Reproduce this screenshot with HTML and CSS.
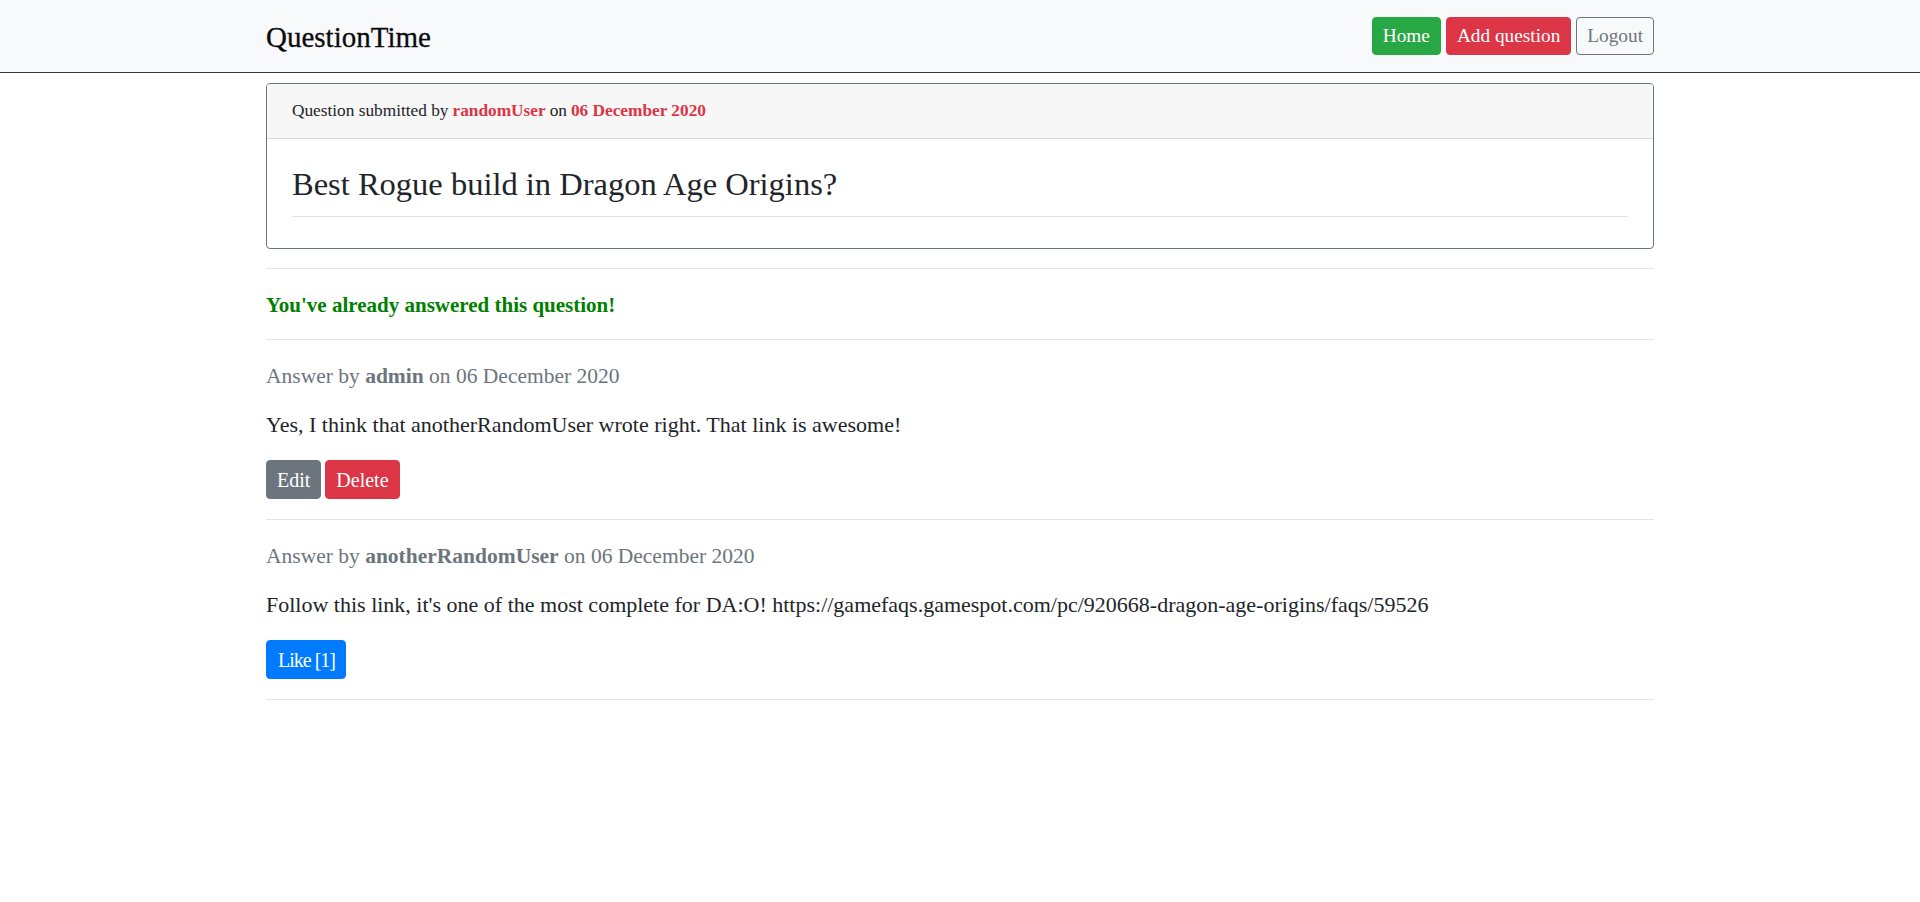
FILE: index.html
```html
<!DOCTYPE html>
<html lang="en">
<head>
<meta charset="utf-8">
<title>QuestionTime</title>
<link rel="stylesheet" href="styles.css">
</head>
<body>
<nav class="navbar">
  <div class="nav-inner">
    <a class="brand" href="#">QuestionTime</a>
    <div class="nav-actions">
      <a class="btn btn-success" href="#">Home</a>
      <a class="btn btn-danger" href="#">Add question</a>
      <a class="btn btn-outline" href="#">Logout</a>
    </div>
  </div>
</nav>
<main class="container">
  <section class="card">
    <div class="card-header">Question submitted by <span class="accent">randomUser</span> on <span class="accent">06 December 2020</span></div>
    <div class="card-body">
      <h2 class="question-title">Best Rogue build in Dragon Age Origins?</h2>
      <hr class="title-rule">
    </div>
  </section>
  <hr class="rule rule-first">
  <p class="notice">You've already answered this question!</p>
  <hr class="rule">
  <article class="answer">
    <p class="answer-meta">Answer by <strong>admin</strong> on 06 December 2020</p>
    <p class="answer-text">Yes, I think that anotherRandomUser wrote right. That link is awesome!</p>
    <div class="answer-actions">
      <a class="btn btn-secondary" href="#">Edit</a>
      <a class="btn btn-danger" href="#">Delete</a>
    </div>
  </article>
  <hr class="rule">
  <article class="answer">
    <p class="answer-meta">Answer by <strong>anotherRandomUser</strong> on 06 December 2020</p>
    <p class="answer-text">Follow this link, it's one of the most complete for DA:O! https://gamefaqs.gamespot.com/pc/920668-dragon-age-origins/faqs/59526</p>
    <div class="answer-actions">
      <a class="btn btn-primary btn-like" href="#">Like [1]</a>
    </div>
  </article>
  <hr class="rule">
</main>
</body>
</html>
```
FILE: styles.css
```css
* { box-sizing: border-box; }
html, body { margin: 0; padding: 0; }
body {
  font-family: "Liberation Serif", "Times New Roman", serif;
  font-size: 22px;
  line-height: 1.5;
  color: #212529;
  background: #fff;
}
a { text-decoration: none; }

.navbar {
  background: #f8f9fa;
  border-bottom: 1px solid #343a40;
  height: 73px;
}
.nav-inner {
  width: 1388px;
  margin: 0 auto;
  height: 72px;
  display: flex;
  align-items: center;
  justify-content: space-between;
}
.brand {
  font-size: 29px;
  color: #0b0b0b;
  font-weight: 400;
  padding-top: 3px;
  -webkit-text-stroke: 0.3px #0b0b0b;
}
.nav-actions { display: flex; gap: 5px; }

.btn {
  display: inline-flex;
  align-items: center;
  justify-content: center;
  height: 38px;
  padding: 0 10px;
  font-size: 19.3px;
  border-radius: 4px;
  border: 1px solid transparent;
  color: #fff;
  line-height: 1;
}
.btn-success { background: #28a745; border-color: #28a745; }
.btn-danger { background: #dc3545; border-color: #dc3545; }
.btn-secondary { background: #6c757d; border-color: #6c757d; }
.btn-primary { background: #007bff; border-color: #007bff; }
.btn-outline { background: transparent; border-color: #6c757d; color: #6c757d; }

.container {
  width: 1388px;
  margin: 0 auto;
  padding-top: 10px;
}
.card {
  border: 1px solid #6c757d;
  border-radius: 4px;
  overflow: hidden;
}
.card-header {
  background: #f7f7f7;
  border-bottom: 1px solid #d6d6d6;
  height: 55px;
  padding: 0 25px;
  display: flex;
  align-items: center;
  font-size: 17.3px;
  gap: 4px;
}
.accent { color: #dc3545; font-weight: 700; }
.card-body { padding: 24px 25px 31px; }
.question-title {
  margin: 0;
  font-size: 32.5px;
  font-weight: 400;
  line-height: 42px;
}
.title-rule {
  margin: 11px 0 0;
  border: 0;
  border-top: 1px solid #e2e2e2;
}
.rule {
  margin: 20px 0 0;
  border: 0;
  border-top: 1px solid #e5e5e5;
}
.rule-first { margin-top: 19px; }
.notice {
  margin: 0;
  padding: 21px 0 19px;
  color: #008000;
  font-weight: 700;
  font-size: 21px;
  line-height: 30px;
}
.notice + .rule { margin-top: 0; }
.answer { padding-top: 21px; }
.answer-meta {
  margin: 0;
  color: #6c757d;
  font-size: 21.5px;
  line-height: 30px;
}
.answer-meta strong { color: #6c757d; }
.answer-text {
  margin: 19px 0 0;
  font-size: 22px;
  line-height: 30px;
}
.answer-actions {
  display: flex;
  gap: 4px;
  margin-top: 20px;
}
.answer-actions .btn { height: 39px; padding: 0 10px; font-size: 20px; }
.answer-actions .btn-like { letter-spacing: -1px; padding: 0 10px 0 11px; }
```
